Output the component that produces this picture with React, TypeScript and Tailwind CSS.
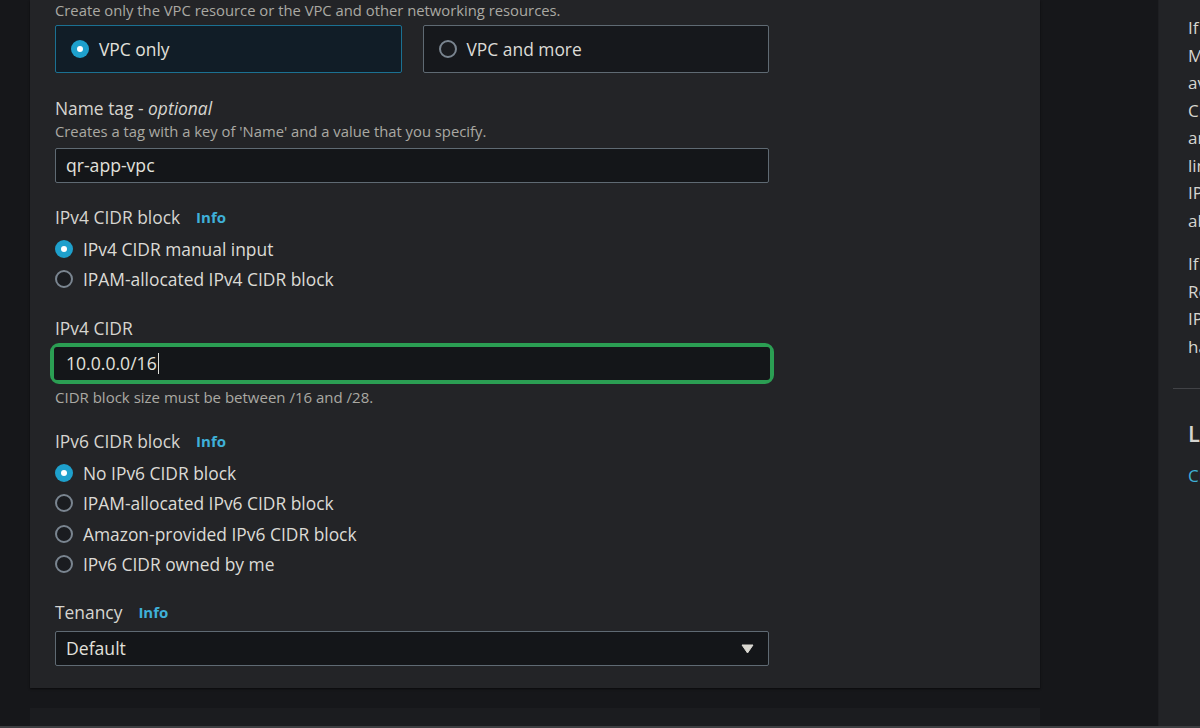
import React from 'react';

const font = { fontFamily: '"Open Sans", "Noto Sans", sans-serif' };

const Radio = ({ checked }: { checked?: boolean }) =>
  checked ? (
    <span className="flex h-[18px] w-[18px] shrink-0 items-center justify-center rounded-full bg-[#1ea0cc]">
      <span className="h-[6px] w-[6px] rounded-full bg-white" />
    </span>
  ) : (
    <span className="h-[18px] w-[18px] shrink-0 rounded-full border-2 border-[#7a8590] bg-[#1a1c20]" />
  );

const Info = () => <span className="ml-[16px] text-[15px] font-bold text-[#3fb0d8]">Info</span>;

const RadioRow = ({ label, checked }: { label: string; checked?: boolean }) => (
  <div className="flex h-[30.5px] items-center gap-[10px]">
    <Radio checked={checked} />
    <span className="text-[17.4px] text-[#dcdbd6]">{label}</span>
  </div>
);

const helpLines1 = [
  'If you choose IPAM-allocated IPv4 CIDR block, an',
  'Manager (IPAM) pool must already exist in this Region',
  'available for allocation. You can choose a',
  'CIDR from the pool or specify a netmask length',
  'and IPAM allocates a CIDR that fits within the',
  'limits of the pool. A VPC can be assigned an',
  'IPv4 CIDR block from any pool with space',
  'able to satisfy the request.',
];

const helpLines2 = [
  'If you choose Amazon-provided IPv6 CIDR block,',
  'Region-specific /56 CIDR blocks are available.',
  'IPv6 addresses from BYOIP pools you',
  'have provisioned can also be used.',
];

export default function App() {
  return (
    <div className="flex h-[728px] w-[1200px] flex-col overflow-hidden bg-[#16171a]" style={font}>
      <div className="flex h-[726px]">
        {/* main column */}
        <div className="flex w-[1040px] shrink-0 flex-col pl-[30px]">
          <div className="h-[688px] shrink-0 bg-[#232427] px-[25px] shadow-[0_1px_2px_rgba(0,0,0,0.6)]">
            <p className="h-[20px] text-[14.8px] leading-[20px] text-[#aaa9a3]">
              Create only the VPC resource or the VPC and other networking resources.
            </p>
            <div className="mt-[5px] grid w-[714px] grid-cols-2 gap-[21px]">
              <div className="flex h-[48px] items-center gap-[10px] rounded-[2px] border border-[#1b7192] bg-[#111d27] px-[15px]">
                <Radio checked />
                <span className="text-[17.4px] text-[#e2e1dc]">VPC only</span>
              </div>
              <div className="flex h-[48px] items-center gap-[10px] rounded-[2px] border border-[#5f6a73] bg-[#16181c] px-[15px]">
                <Radio />
                <span className="text-[17.4px] text-[#dcdbd6]">VPC and more</span>
              </div>
            </div>

            <div className="mt-[23px] text-[17.4px] leading-[24px] text-[#d6d5d0]">
              Name tag - <i>optional</i>
            </div>
            <div className="mt-[1px] text-[14.8px] leading-[20px] text-[#aaa9a3]">
              Creates a tag with a key of 'Name' and a value that you specify.
            </div>
            <div className="mt-[7px] flex h-[35px] w-[714px] items-center rounded-[2px] border border-[#5f6a73] bg-[#141619] px-[10px] text-[17.6px] text-[#e2e1dc]">
              qr-app-vpc
            </div>

            <div className="mt-[22px] flex items-center text-[17.4px] leading-[24px] text-[#d6d5d0]">
              IPv4 CIDR block <Info />
            </div>
            <div className="mt-[4.5px]">
              <RadioRow label="IPv4 CIDR manual input" checked />
              <RadioRow label="IPAM-allocated IPv4 CIDR block" />
            </div>

            <div className="mt-[21px] text-[17.4px] leading-[24px] text-[#d6d5d0]">IPv4 CIDR</div>
            <div className="-mx-[5px] mt-[3px] w-[724px] rounded-[9px] border-[4px] border-[#2b9e53]">
              <div className="flex h-[33px] items-center rounded-[3px] bg-[#141619] px-[12px] text-[17.6px] text-[#e2e1dc]">
                10.0.0.0/16<span className="ml-[1px] h-[21px] w-px bg-[#e2e1dc]" />
              </div>
            </div>
            <div className="mt-[3px] text-[15px] leading-[20px] text-[#aaa9a3]">
              CIDR block size must be between /16 and /28.
            </div>

            <div className="mt-[22px] flex items-center text-[17.4px] leading-[24px] text-[#d6d5d0]">
              IPv6 CIDR block <Info />
            </div>
            <div className="mt-[5px]">
              <RadioRow label="No IPv6 CIDR block" checked />
              <RadioRow label="IPAM-allocated IPv6 CIDR block" />
              <RadioRow label="Amazon-provided IPv6 CIDR block" />
              <RadioRow label="IPv6 CIDR owned by me" />
            </div>

            <div className="mt-[20.5px] flex items-center text-[17.4px] leading-[24px] text-[#d6d5d0]">
              Tenancy <Info />
            </div>
            <div className="mt-[7px] flex h-[35px] w-[714px] items-center justify-between rounded-[2px] border border-[#5f6a73] bg-[#141619] pl-[10px] pr-[14px] text-[17.6px] text-[#e2e1dc]">
              <span>Default</span>
              <svg width="13" height="10" viewBox="0 0 13 10">
                <path d="M1 1 L12 1 L6.5 9 Z" fill="#d9d7d0" stroke="#d9d7d0" strokeLinejoin="round" />
              </svg>
            </div>
          </div>
          <div className="mt-[20px] flex-1 bg-[#1b1c1f]" />
        </div>

        {/* gap */}
        <div className="w-[118px] shrink-0" />

        {/* help panel */}
        <div className="flex-1 overflow-hidden border-l border-[#1e1f22] bg-[#222326] pl-[29px]">
          <div className="pt-[14px] text-[17px] leading-[27.5px] text-[#d6d5d0]">
            {helpLines1.map((l) => (
              <div key={l} className="whitespace-nowrap">{l}</div>
            ))}
            <div className="h-[16px]" />
            {helpLines2.map((l) => (
              <div key={l} className="whitespace-nowrap">{l}</div>
            ))}
          </div>
          <div className="-ml-[15px] mt-[28px] h-px bg-[#414246]" />
          <div className="mt-[30px] whitespace-nowrap text-[22px] font-semibold leading-[28px] text-[#d6d5d0]">Learn more</div>
          <div className="mt-[16px] whitespace-nowrap text-[17px] text-[#3fb0d8]">CIDR blocks</div>
        </div>
      </div>
      <div className="h-[2px] bg-[#3d3e41]" />
    </div>
  );
}
